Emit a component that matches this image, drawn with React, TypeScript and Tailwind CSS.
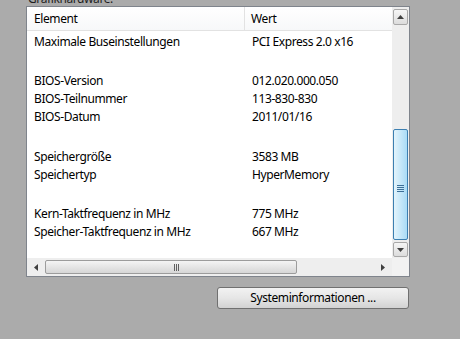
import React from 'react';

type Row = { label: string; value: string } | { gap: number };

const rows: Row[] = [
  { label: 'Maximale Buseinstellungen', value: 'PCI Express 2.0 x16' },
  { gap: 21 },
  { label: 'BIOS-Version', value: '012.020.000.050' },
  { label: 'BIOS-Teilnummer', value: '113-830-830' },
  { label: 'BIOS-Datum', value: '2011/01/16' },
  { gap: 22 },
  { label: 'Speichergröße', value: '3583 MB' },
  { label: 'Speichertyp', value: 'HyperMemory' },
  { gap: 21 },
  { label: 'Kern-Taktfrequenz in MHz', value: '775 MHz' },
  { label: 'Speicher-Taktfrequenz in MHz', value: '667 MHz' },
];

const VScrollBar: React.FC = () => (
  <div className="w-[17px] bg-[#eeeeee] flex flex-col items-center pt-[2px] pb-[1px]">
    <div className="w-[15px] h-[16px] border border-[#a8a8a8] rounded-[2px] bg-gradient-to-b from-[#f6f6f6] to-[#dcdcdc] flex items-center justify-center">
      <svg width="7" height="4" viewBox="0 0 7 4">
        <path d="M0 4 L3.5 0 L7 4 Z" fill="#404040" />
      </svg>
    </div>
    <div className="flex-1 w-full flex flex-col items-center pt-[104px] pb-[2px]">
      <div className="w-[15px] flex-1 border border-[#3c7fb1] rounded-[2px] bg-gradient-to-r from-[#e3f4fc] to-[#a9dbf6] flex items-center justify-center">
        <div className="flex flex-col gap-[1px] mt-[8px]">
          <div className="w-[7px] h-[1px] bg-[#3c6f98]" />
          <div className="w-[7px] h-[1px] bg-[#3c6f98]" />
          <div className="w-[7px] h-[1px] bg-[#3c6f98]" />
          <div className="w-[7px] h-[1px] bg-[#3c6f98]" />
        </div>
      </div>
    </div>
    <div className="w-[15px] h-[15px] border border-[#a8a8a8] rounded-[2px] bg-gradient-to-b from-[#f6f6f6] to-[#dcdcdc] flex items-center justify-center">
      <svg width="7" height="4" viewBox="0 0 7 4">
        <path d="M0 0 L3.5 4 L7 0 Z" fill="#404040" />
      </svg>
    </div>
  </div>
);

const HScrollBar: React.FC = () => (
  <div className="h-[18px] flex">
    <div className="flex-1 bg-[#eeeeee] flex items-center">
      <div className="w-[18px] flex items-center justify-center">
        <svg width="4" height="7" viewBox="0 0 4 7">
          <path d="M4 0 L0 3.5 L4 7 Z" fill="#404040" />
        </svg>
      </div>
      <div className="w-[252px] h-[14px] border border-[#9c9c9c] rounded-[2px] bg-gradient-to-b from-[#f4f4f4] to-[#d6d6d6] flex items-center justify-center">
        <div className="flex gap-[1px] ml-[10px]">
          <div className="w-[1px] h-[7px] bg-[#606060]" />
          <div className="w-[1px] h-[7px] bg-[#606060]" />
          <div className="w-[1px] h-[7px] bg-[#606060]" />
        </div>
      </div>
      <div className="flex-1" />
      <div className="w-[18px] flex items-center justify-center">
        <svg width="4" height="7" viewBox="0 0 4 7">
          <path d="M0 0 L4 3.5 L0 7 Z" fill="#404040" />
        </svg>
      </div>
    </div>
    <div className="w-[17px] bg-[#f2f2f2]" />
  </div>
);

export default function App() {
  return (
    <div
      className="w-[460px] h-[339px] bg-[#ababab] overflow-hidden text-[12px] tracking-[-0.4px] text-black"
      style={{ fontFamily: '"Noto Sans", "Open Sans", sans-serif' }}
    >
      <div className="-mt-[8px] h-[14px] leading-[14px] pl-[28px] text-[#1e1e1e]">Grafikhardware:</div>
      <div className="ml-[26px] w-[384px] h-[271px] border border-[#7f848c] bg-white flex flex-col">
        <div className="flex flex-1 min-h-0">
          <div className="flex-1 flex flex-col overflow-hidden">
            <div className="h-[24px] flex border-b border-[#e2e2e2] bg-gradient-to-b from-white to-[#f7f8f9]">
              <div className="w-[218px] pl-[7px] flex items-center border-r border-[#e2e2e2]">Element</div>
              <div className="flex-1 pl-[6px] flex items-center">Wert</div>
            </div>
            <div className="flex flex-col pt-[2px]">
              {rows.map((r, i) =>
                'gap' in r ? (
                  <div key={i} style={{ height: r.gap }} />
                ) : (
                  <div key={i} className="h-[18px] flex items-center">
                    <div className="w-[219px] pl-[7px] whitespace-nowrap">{r.label}</div>
                    <div className="flex-1 pl-[6px] whitespace-nowrap">{r.value}</div>
                  </div>
                )
              )}
            </div>
          </div>
          <VScrollBar />
        </div>
        <HScrollBar />
      </div>
      <button className="mt-[10px] ml-[217px] w-[192px] h-[22px] border border-[#707070] rounded-[3px] bg-gradient-to-b from-[#f2f2f2] via-[#e6e6e6] to-[#d2d2d2] flex items-center justify-center text-[12px]">
        Systeminformationen ...
      </button>
    </div>
  );
}
